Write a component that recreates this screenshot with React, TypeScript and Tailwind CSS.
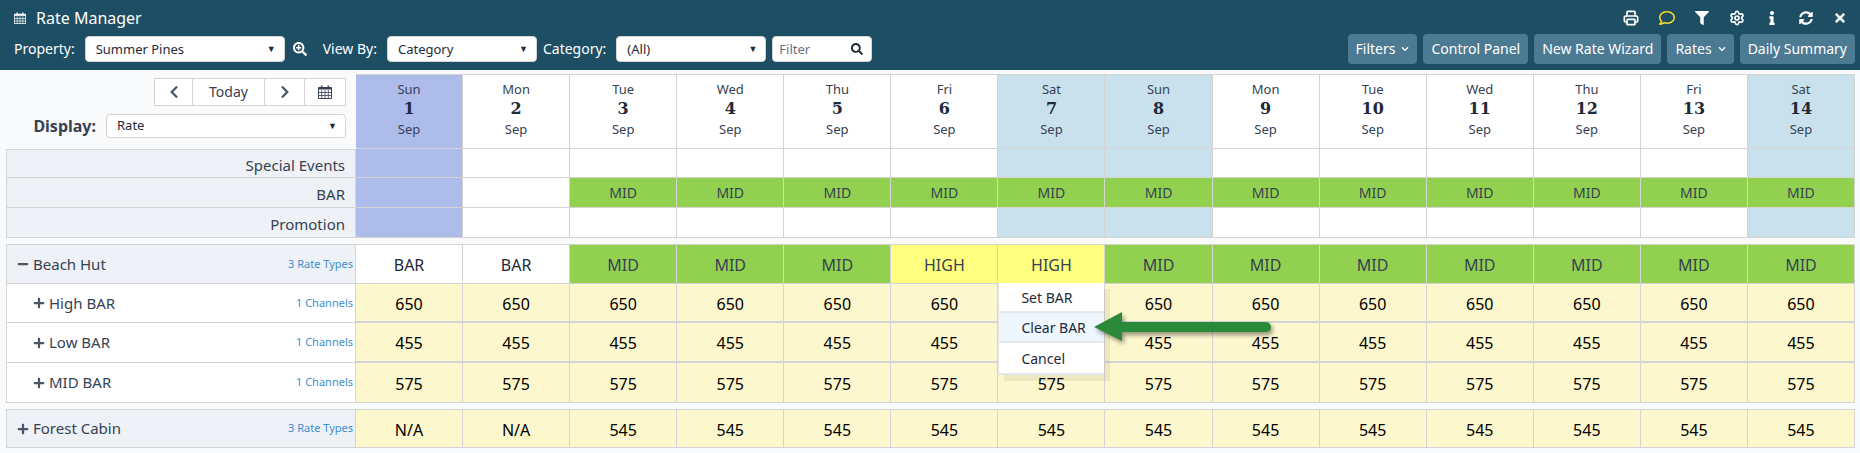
import {
  FaChevronDown,
  FaChevronLeft,
  FaChevronRight,
  FaFilter,
  FaInfo,
  FaMinus,
  FaPlus,
  FaRegComment,
  FaSearch,
  FaSearchPlus,
  FaSyncAlt,
  FaTimes,
} from "react-icons/fa";
import { Printer, Settings } from "lucide-react";

const row = "grid grid-cols-[350px_repeat(14,minmax(0,1fr))]";

const days = [
  ["Sun", "1"], ["Mon", "2"], ["Tue", "3"], ["Wed", "4"], ["Thu", "5"], ["Fri", "6"], ["Sat", "7"],
  ["Sun", "8"], ["Mon", "9"], ["Tue", "10"], ["Wed", "11"], ["Thu", "12"], ["Fri", "13"], ["Sat", "14"],
];

// tint of a date column
function dayBg(i: number) {
  if (i === 0) return "bg-[#aebceb]";
  if (i === 6 || i === 7 || i === 13) return "bg-[#c9e1ec]";
  return "bg-white";
}

// old font awesome calendar, the package one has no grid
function CalendarIcon({ className }: { className: string }) {
  return (
    <svg viewBox="0 0 14 14" className={className} fill="none" stroke="currentColor">
      <path d="M0.5 2.5H13.5V13.5H0.5Z" />
      <path d="M0.5 3.5H13.5" strokeWidth="2" />
      <path d="M3.7 5V13M7 5V13M10.3 5V13M1 7.5H13M1 10.5H13" strokeWidth="0.8" />
      <path d="M3.7 0.5V3M10.3 0.5V3" strokeWidth="1.5" />
    </svg>
  );
}

function Select({ value, className }: { value: string; className: string }) {
  return (
    <div className={`flex items-center justify-between rounded-sm border border-neutral-300 bg-white pl-2.5 pr-2 text-[13px] text-gray-800 ${className}`}>
      <span>{value}</span>
      <span className="text-[9px] text-gray-800">▼</span>
    </div>
  );
}

function Button({ label, caret }: { label: string; caret?: boolean }) {
  return (
    <div className="flex h-7.5 items-center gap-1.5 rounded-sm bg-[#4b7a92] px-2 text-sm text-white">
      {label}
      {caret && <FaChevronDown className="size-2" />}
    </div>
  );
}

function Header() {
  return (
    <header className="flex h-17.5 flex-col bg-[#1d4e64] pl-3.5 pr-1.25 text-white">
      <div className="flex items-center justify-between pt-1.5">
        <div className="flex items-center gap-2.5 text-base">
          <CalendarIcon className="size-3" />
          Rate Manager
        </div>
        <div className="flex items-center gap-5 pr-2 text-sm">
          <Printer className="size-4" strokeWidth={2.5} />
          <FaRegComment className="size-4 text-yellow-300" />
          <FaFilter className="size-3.5" />
          <Settings className="size-4" strokeWidth={2.5} />
          <FaInfo className="size-3.5" />
          <FaSyncAlt className="size-3.5" />
          <FaTimes className="size-3.5" />
        </div>
      </div>
      <div className="mt-1 flex items-center justify-between">
        <div className="flex items-center text-sm">
          <span>Property:</span>
          <Select value="Summer Pines" className="ml-2.5 h-6.5 w-50" />
          <FaSearchPlus className="mx-2 size-3.5" />
          <span className="ml-2">View By:</span>
          <Select value="Category" className="ml-2.5 h-6.5 w-37.5" />
          <span className="ml-1.5">Category:</span>
          <Select value="(All)" className="ml-2.5 h-6.5 w-37.5" />
          <div className="ml-1.5 flex h-6.5 w-25 items-center justify-between rounded-sm border border-neutral-300 bg-white pl-1.5 pr-2 text-[13px] text-gray-500">
            Filter
            <FaSearch className="size-3 text-gray-800" />
          </div>
        </div>
        <div className="flex items-center gap-1.5">
          <Button label="Filters" caret />
          <Button label="Control Panel" />
          <Button label="New Rate Wizard" />
          <Button label="Rates" caret />
          <Button label="Daily Summary" />
        </div>
      </div>
    </header>
  );
}

function DateHead() {
  return (
    <div className={`${row} mt-1`}>
      <div className="flex flex-col items-end gap-2 pr-2.5 pt-1">
        <div className="flex h-7 items-center border border-neutral-300 bg-white text-gray-700">
          <div className="flex h-full w-9.5 items-center justify-center border-r border-neutral-300"><FaChevronLeft className="size-3.5 text-gray-600" /></div>
          <div className="flex h-full w-18 items-center justify-center border-r border-neutral-300 text-sm">Today</div>
          <div className="flex h-full w-10 items-center justify-center border-r border-neutral-300"><FaChevronRight className="size-3.5 text-gray-600" /></div>
          <div className="flex h-full w-10 items-center justify-center"><CalendarIcon className="size-3.5 text-gray-700" /></div>
        </div>
        <div className="flex items-center gap-2.5">
          <span className="text-base font-bold text-gray-700">Display:</span>
          <Select value="Rate" className="h-6 w-60 border-gray-400" />
        </div>
      </div>
      {days.map(([name, num], i) => (
        <div key={i} className={`flex flex-col items-center border-b border-r border-t border-neutral-300 pb-2.25 pt-1 text-[13px] leading-5 text-gray-700 ${dayBg(i)}`}>
          <span>{name}</span>
          <span className="font-['DejaVu_Serif',serif] text-base font-bold leading-5 text-gray-800">{num}</span>
          <span>Sep</span>
        </div>
      ))}
    </div>
  );
}

function InfoRow({ label, mids, dayTint, first }: { label: string; mids?: boolean; dayTint?: boolean; first?: boolean }) {
  return (
    <div className={row}>
      <div className={`flex items-center justify-end border-b border-l border-r border-neutral-300 bg-[#eef1f6] pr-2.5 pt-1 text-[15px] text-gray-700 ${first ? "h-7.25 border-t" : "h-7.5"}`}>{label}</div>
      {days.map((_, i) => (
        <div key={i} className={`flex items-center justify-center border-b border-r border-neutral-300 text-sm text-gray-700 ${mids && i > 1 ? "bg-[#92d14f]" : i === 0 || dayTint ? dayBg(i) : "bg-white"}`}>
          {mids && i > 1 ? "MID" : ""}
        </div>
      ))}
    </div>
  );
}

function PopupMenu() {
  return (
    <div className="absolute left-0 top-full z-10 w-full">
      <div className="flex flex-col border-b-2 border-l border-gray-200 bg-white text-sm text-gray-800 shadow-[6px_6px_0_rgba(0,0,0,0.06)]">
        <div className="flex h-7.5 items-center border-b-2 border-gray-200 pl-5.5 pt-0.5">Set BAR</div>
        <div className="flex h-7.5 items-center border-b-2 border-gray-200 bg-[#eef6fe] pl-5.5 pt-0.5">Clear BAR</div>
        <div className="flex h-7.5 items-center pl-5.5 pt-0.5">Cancel</div>
      </div>
      <svg width="190" height="40" viewBox="0 0 190 40" className="absolute left-24 top-7 overflow-visible drop-shadow-[2px_3px_2px_rgba(0,0,0,0.4)]">
        <path d="M0 16 L28 1 L28 11 L172 11 A5 5 0 0 1 172 21 L28 21 L28 30 Z" fill="#2a8a3a" />
      </svg>
    </div>
  );
}

function CategoryRow({ name, open, bars, rates }: { name: string; open?: boolean; bars?: string[]; rates?: string[] }) {
  return (
    <div className={row}>
      <div className={`flex items-center border-b border-l border-r border-t border-neutral-300 bg-[#eef1f6] pl-2.5 pr-0.5 text-[15px] text-gray-700 ${rates ? "h-9.75" : "h-10"}`}>
        {open ? <FaMinus className="size-3 text-gray-600" /> : <FaPlus className="size-3 text-gray-600" />}
        <span className="ml-1 flex-1">{name}</span>
        <span className="text-[11px] text-[#3a8fd0]">3 Rate Types</span>
      </div>
      {(bars ?? rates ?? []).map((v, i) => (
        <div
          key={i}
          className={`relative flex items-center justify-center border-b border-r border-t border-neutral-300 pt-0.5 text-base ${
            rates ? "bg-[#fdf7cd] text-black" : v === "MID" ? "bg-[#92d14f] text-gray-700" : v === "HIGH" ? "bg-[#ffff7f] text-gray-700" : "bg-white text-gray-800"
          }`}
        >
          {v}
          {bars && i === 6 && <PopupMenu />}
        </div>
      ))}
    </div>
  );
}

function RateRow({ name, value, covered, thick, short }: { name: string; value: string; covered?: boolean; thick?: boolean; short?: boolean }) {
  return (
    <div className={row}>
      <div className={`flex items-center border-b border-l border-r border-neutral-300 bg-white pl-6.5 pr-0.5 text-[15px] text-gray-700 ${short ? "h-9.75" : "h-10"}`}>
        <FaPlus className="size-3 text-gray-600" />
        <span className="ml-1 flex-1">{name}</span>
        <span className="text-[11px] text-[#3a8fd0]">1 Channels</span>
      </div>
      {days.map((_, i) => (
        <div key={i} className={`flex items-center justify-center border-r border-neutral-300 bg-[#fdf7cd] pt-0.5 text-base text-black ${thick ? "border-b-2" : "border-b"}`}>
          {/* the popup sits over the Sat 7 cell of these rows */}
          {covered && i === 6 ? "" : value}
        </div>
      ))}
    </div>
  );
}

export default function App() {
  const beachBars = ["BAR", "BAR", "MID", "MID", "MID", "HIGH", "HIGH", "MID", "MID", "MID", "MID", "MID", "MID", "MID"];
  const forest = ["N/A", "N/A", ...Array(12).fill("545")];

  return (
    <div className="h-[453px] overflow-hidden bg-[#f8fafc] font-['Noto_Sans',sans-serif]">
      <Header />
      <main className="pl-1.5 pr-1.25">
        <DateHead />
        <InfoRow label="Special Events" dayTint first />
        <InfoRow label="BAR" mids />
        <InfoRow label="Promotion" dayTint />
        <div className="mt-1.5">
          <CategoryRow name="Beach Hut" open bars={beachBars} />
          <RateRow name="High BAR" value="650" covered thick short />
          <RateRow name="Low BAR" value="455" covered thick />
          <RateRow name="MID BAR" value="575" />
        </div>
        <div className="mt-1.5">
          <CategoryRow name="Forest Cabin" rates={forest} />
        </div>
      </main>
    </div>
  );
}
